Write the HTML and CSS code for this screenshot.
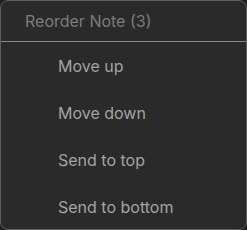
FILE: index.html
```html
<!DOCTYPE html>
<html lang="en">
<head>
    <meta charset="UTF-8">
    <title>Reorder Note</title>
    <link rel="stylesheet" href="styles.css">
</head>
<body>
    <div class="menu">
        <div class="menu-title">Reorder Note (3)</div>
        <ul class="menu-list">
            <li>Move up</li>
            <li>Move down</li>
            <li>Send to top</li>
            <li>Send to bottom</li>
        </ul>
    </div>
</body>
</html>
```

FILE: styles.css
```css
body {
    margin: 0;
    background-color: #202020;
    font-family: Inter, "Noto Sans", sans-serif;
}

.menu {
    width: 247px;
    height: 230px;
    box-sizing: border-box;
    background-color: #2a2a2a;
    border: 1px solid #5e5e5e;
    border-radius: 8px;
    overflow: hidden;
}

.menu-title {
    height: 40px;
    line-height: 40px;
    padding-left: 24px;
    font-size: 16px;
    color: #7c7c7c;
    border-bottom: 1px solid #8a8a8a;
}

.menu-list {
    list-style: none;
    margin: 0;
    padding: 1px 0 0 0;
}

.menu-list li {
    line-height: 47px;
    padding-left: 57px;
    font-size: 16px;
    color: #a3a3a3;
}
```
